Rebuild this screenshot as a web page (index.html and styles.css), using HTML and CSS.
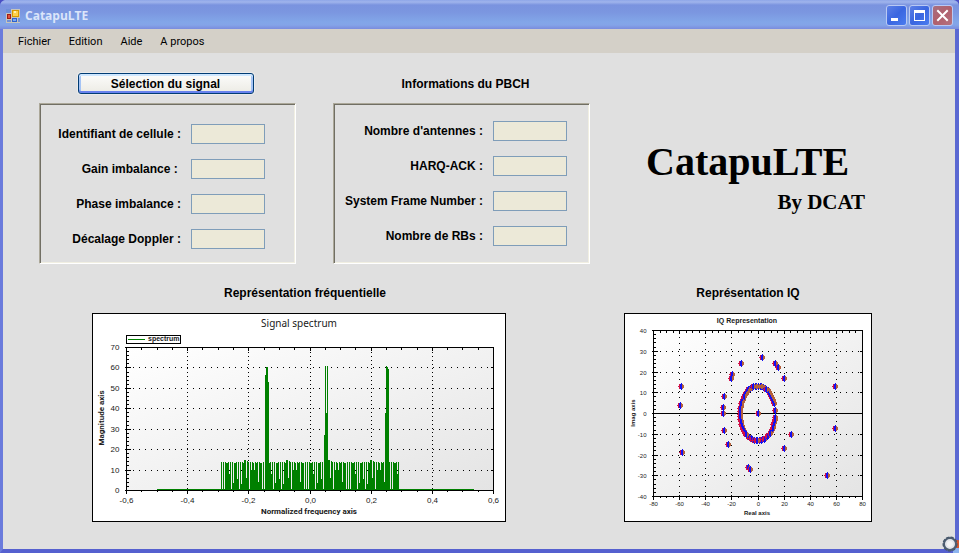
FILE: index.html
```html
<!DOCTYPE html>
<html lang="fr">
<head>
<meta charset="utf-8">
<title>CatapuLTE</title>
<link rel="stylesheet" href="styles.css">
</head>
<body>
<div class="window">
  <header class="titlebar">
    <svg class="app-icon" width="14" height="14" viewBox="0 0 14 14" aria-hidden="true">
      <rect width="14" height="14" fill="#c9c5ba"/>
      <path d="M0 0h5v4H0zM1 11h4v2H1zM12 9h2v4h-2z" fill="#6f8fd8"/>
      <rect x="6.500" y="1.500" width="6" height="6" fill="#ffd24a" stroke="#d79a00"/>
      <rect x="8" y="2" width="2" height="2" fill="#fff2b0"/>
      <rect x="1.500" y="5.500" width="3" height="4" fill="#e0523c" stroke="#a01c14"/>
      <rect x="6.500" y="9.500" width="4" height="3" fill="#78a8f4" stroke="#2f62cc"/>
    </svg>
    <h1 class="title">CatapuLTE</h1>
    <div class="controls">
      <button class="control" type="button" aria-label="Réduire"><svg width="19" height="19" viewBox="0 0 19 19"><path d="M4 12h7v3H4z" fill="#fff"/></svg></button>
      <button class="control" type="button" aria-label="Agrandir"><svg width="19" height="19" viewBox="0 0 19 19"><path d="M4 4h11v11H4zM5 7v7h9V7z" fill="#fff" fill-rule="evenodd"/></svg></button>
      <button class="control close" type="button" aria-label="Fermer"><svg width="19" height="19" viewBox="0 0 19 19"><path d="M5 5l9 9M14 5l-9 9" stroke="#fff" stroke-width="2" stroke-linecap="square"/></svg></button>
    </div>
  </header>
  <nav class="menu">
    <button type="button">Fichier</button>
    <button type="button">Edition</button>
    <button type="button">Aide</button>
    <button type="button">A propos</button>
  </nav>
  <main class="content">
    <div class="top">
      <section class="group">
        <button class="select-signal" type="button">Sélection du signal</button>
        <div class="panel signal">
          <div class="field"><label for="cell">Identifiant de cellule :</label><input id="cell" type="text" readonly></div>
          <div class="field"><label for="gain">Gain imbalance :&nbsp;</label><input id="gain" type="text" readonly></div>
          <div class="field"><label for="phase">Phase imbalance :</label><input id="phase" type="text" readonly></div>
          <div class="field"><label for="doppler">Décalage Doppler :</label><input id="doppler" type="text" readonly></div>
        </div>
      </section>
      <section class="group">
        <h2 class="heading tall">Informations du PBCH</h2>
        <div class="panel pbch">
          <div class="field"><label for="ant">Nombre d'antennes :</label><input id="ant" type="text" readonly></div>
          <div class="field"><label for="harq">HARQ-ACK :</label><input id="harq" type="text" readonly></div>
          <div class="field"><label for="sfn">System Frame Number :</label><input id="sfn" type="text" readonly></div>
          <div class="field"><label for="rbs">Nombre de RBs :</label><input id="rbs" type="text" readonly></div>
        </div>
      </section>
      <div class="brand">
        <p class="brand-name">CatapuLTE</p>
        <p class="brand-by">By DCAT</p>
      </div>
    </div>
    <div class="bottom">
      <section class="figure">
        <h2 class="heading offset">Représentation fréquentielle</h2>
        <svg id="spectrum" class="chart" viewBox="0 0 414 209" role="img" aria-label="Signal spectrum"></svg>
      </section>
      <section class="figure">
        <h2 class="heading">Représentation IQ</h2>
        <svg id="iq" class="chart" viewBox="0 0 248 209" role="img" aria-label="IQ Representation"></svg>
      </section>
    </div>
  </main>
  <svg class="corner" width="17" height="17" viewBox="0 0 17 17" aria-hidden="true">
    <path d="M11 12h6v5h-6z" fill="#8db4ee"/>
    <circle cx="15" cy="8" r="4" fill="#d9572c"/>
    <circle cx="8" cy="8" r="6" fill="#e9ebee" stroke="#3d4f63" stroke-width="3" stroke-dasharray="3 1"/>
    <circle cx="8" cy="8" r="6" fill="#e4e6ea" stroke="#4d5d70" stroke-width="2"/>
    <circle cx="8" cy="8" r="3" fill="#f4f4f4"/>
  </svg>
</div>
<script src="charts.js"></script>
</body>
</html>
```
FILE: styles.css
```css
* { box-sizing: border-box; }

body {
  margin: 0;
  background: #4a4fc4;
  color: #000;
  font: 12px/16px "Liberation Sans", Arial, sans-serif;
}

h1, h2, p { margin: 0; }

button { font: inherit; color: inherit; padding: 0; }

.window {
  position: relative;
  display: flex;
  flex-direction: column;
  min-height: 100vh;
  border: solid #6b7bdc;
  border-width: 0 4px 4px 3px;
  border-bottom-color: #5560cf;
  border-right-color: #5a68d2;
  border-radius: 6px 6px 0 0;
  background: #e0e0e0;
}

.titlebar {
  display: flex;
  align-items: center;
  height: 29px;
  margin: 0 -4px 0 -3px;
  padding: 2px 6px 0;
  border-radius: 6px 6px 0 0;
  background: linear-gradient(#8ea6e8 0, #a0b4ec 2px, #7a93df 5px, #7b96e0 12px, #82a6e8 22px, #84a4e8 25px, #7a8cdd 29px);
}

.app-icon { flex: none; }

.title {
  flex: 1;
  padding-left: 5px;
  color: #dbe5fa;
  font: bold 12px/16px "Open Sans", "Noto Sans", sans-serif;
}

.controls { display: flex; gap: 2px; }

.control {
  width: 21px;
  height: 21px;
  border: 1px solid #b9c9f4;
  border-radius: 3px;
  background: linear-gradient(135deg, #5d80e6, #3a66e0 50%, #4a7cf0);
}

.control svg { display: block; }

.control.close { background: linear-gradient(135deg, #a8707f, #b0606c 50%, #b57280); }

.menu {
  display: flex;
  gap: 18px;
  height: 24px;
  padding: 1px 0 0 15px;
  background: #d4d0c8;
}

.menu button {
  border: 0;
  background: none;
  font: 11px/22px Roboto, sans-serif;
}

.content { flex: 1; padding: 20px 0 27px; }

.top {
  display: grid;
  grid-template-columns: 257fr 257fr 239fr;
  column-gap: 37px;
  padding: 0 89px 0 36px;
}

.top .brand { margin-left: 19px; }

.group { display: flex; flex-direction: column; gap: 9px; }

.heading {
  text-align: center;
  font-size: 12px;
  line-height: 16px;
}

.heading.tall { padding: 3px 0 2px 8px; }

.heading.offset { padding-left: 12px; }

.select-signal {
  align-self: center;
  width: 176px;
  height: 21px;
  margin-right: 4px;
  border: 1px solid #003c74;
  border-radius: 3px;
  background: linear-gradient(#fcfcfb, #ecebe4);
  box-shadow: inset 0 2px #cee7ff, inset 0 -2px #6982ee, inset 2px 0 #a5c4f5, inset -2px 0 #a5c4f5, 0 0 0 1px #ebebeb;
  font-weight: bold;
}

.panel {
  display: flex;
  flex-direction: column;
  gap: 15px;
  height: 161px;
  border: 1px solid;
  border-color: #aca899 #fff #fff #aca899;
  box-shadow: inset 1px 1px #716f64, inset -1px -1px #f1efe2;
}

.signal { padding: 20px 30px 0 0; }

.pbch { padding: 17px 22px 0 0; }

.field {
  display: flex;
  align-items: center;
  justify-content: flex-end;
  gap: 10px;
  font-weight: bold;
}

.field input {
  width: 74px;
  height: 20px;
  border: 1px solid #7f9db9;
  background: #ece9d8;
}

.brand {
  justify-self: start;
  padding-top: 65px;
  font-family: "Liberation Serif", "Times New Roman", serif;
  font-weight: bold;
}

.brand-name { padding-right: 16px; font-size: 40px; line-height: 48px; }

.brand-by { text-align: right; font-size: 21px; line-height: 32px; }

.bottom {
  display: grid;
  grid-template-columns: 414fr 248fr;
  column-gap: 118px;
  margin-top: 21px;
  padding: 0 83px 0 89px;
}

.figure { display: flex; flex-direction: column; gap: 12px; }

.chart { display: block; width: 100%; height: auto; font-family: "Liberation Sans", Arial, sans-serif; }

.chart text { fill: #202020; }
.chart .bold { font-weight: bold; }
.chart .caption { font-size: 10px; font-family: "Noto Sans", sans-serif; }
.chart .axis { font-size: 8px; }
.chart .title-text { font-size: 8px; font-family: Roboto, sans-serif; }
.chart .key { font-size: 7px; }
.chart .small { font-size: 6px; }

.corner { position: absolute; right: -4px; bottom: -4px; }
```
FILE: charts.js
```js
const NS = 'http://www.w3.org/2000/svg';

function add(parent, tag, attrs, text) {
  const node = document.createElementNS(NS, tag);
  for (const key in attrs) node.setAttribute(key, attrs[key]);
  if (text !== undefined) node.textContent = text;
  parent.appendChild(node);
  return node;
}

function frame(svg, w, h, p, id) {
  const grad = add(add(svg, 'defs', {}), 'linearGradient', { id, x1: 0, y1: 0, x2: 1, y2: 1 });
  add(grad, 'stop', { offset: 0, 'stop-color': '#ffffff' });
  add(grad, 'stop', { offset: 1, 'stop-color': '#e4e4e4' });
  add(svg, 'rect', { x: 0.5, y: 0.5, width: w - 1, height: h - 1, fill: '#fff', stroke: '#000' });
  add(svg, 'rect', { x: p.l, y: p.t, width: p.r - p.l, height: p.b - p.t, fill: `url(#${id})` });
}

function line(svg, x1, y1, x2, y2, dash) {
  const attrs = { x1, y1, x2, y2, stroke: '#000', 'shape-rendering': 'crispEdges' };
  if (dash) attrs['stroke-dasharray'] = dash;
  add(svg, 'line', attrs);
}

// Draws the grid, ticks and tick labels for both axes, then the plot border.
function axes(svg, p, xs, ys, minorX, minorY, cls, drop, vdash) {
  const snap = v => Math.floor(v) + 0.5;
  const w = p.r - p.l, h = p.b - p.t;
  xs.forEach((label, i) => {
    const x = snap(p.l + w * i / (xs.length - 1));
    if (i > 0 && i < xs.length - 1) line(svg, x, p.t, x, p.b, vdash);
    line(svg, x, p.b - 2, x, p.b + 3);
    line(svg, x, p.t, x, p.t + 3);
    add(svg, 'text', { x, y: p.b + drop, 'text-anchor': 'middle', class: cls }, label);
  });
  ys.forEach((label, i) => {
    const y = snap(p.b - h * i / (ys.length - 1));
    if (i > 0 && i < ys.length - 1) line(svg, p.l, y, p.r, y, '1 5');
    line(svg, p.l - 2, y, p.l + 4, y);
    line(svg, p.r - 3, y, p.r, y);
    add(svg, 'text', { x: p.l - 7, y: y + 2, 'text-anchor': 'end', class: cls }, label);
  });
  for (let i = 1; i < minorX; i++) {
    const x = snap(p.l + w * i / minorX);
    line(svg, x, p.b - 1, x, p.b + 1);
    line(svg, x, p.t, x, p.t + 2);
  }
  for (let i = 1; i < minorY; i++) {
    const y = snap(p.b - h * i / minorY);
    line(svg, p.l - 1, y, p.l + 2, y);
    line(svg, p.r - 1, y, p.r, y);
  }
  add(svg, 'rect', { x: p.l, y: p.t, width: w, height: h, fill: 'none', stroke: '#000', 'shape-rendering': 'crispEdges' });
}

function drawSpectrum() {
  const svg = document.getElementById('spectrum');
  const p = { l: 34.5, r: 401.5, t: 34.5, b: 177.5 };
  frame(svg, 414, 209, p, 'spectrum-fill');
  axes(svg, p, ['-0,6', '-0,4', '-0,2', '0,0', '0,2', '0,4', '0,6'],
    ['0', '10', '20', '30', '40', '50', '60', '70'], 24, 35, 'axis', 12, '1 3');

  const shape = [28, 0, 28, 1, 28, 27, 27, 28, 16, 28, 0, 28, 7, 27, 27, 28, 11, 28, 0, 28,
    6, 28, 27, 30, 30, 12, 29, 28, 0, 28, 20, 28, 27, 20, 28, 27, 28, 8, 28, 27, 27, 0];
  const peaks = { 173: 115, 174: 123, 175: 123, 176: 108, 232: 55, 233: 124, 234: 77, 235: 124,
    293: 77, 294: 124, 295: 123, 296: 121 };
  let d = 'M65 176h317v1H65z';
  for (let x = 129; x < 308; x++) {
    const h = peaks[x] || shape[(x - 129) % shape.length];
    if (h) d += `M${x} ${177 - h}h1v${h}h-1z`;
  }
  add(svg, 'path', { d, fill: '#008000', 'shape-rendering': 'crispEdges' });

  add(svg, 'rect', { x: 34.5, y: 22.5, width: 54, height: 8, fill: '#fff', stroke: '#000' });
  add(svg, 'path', { d: 'M36 26h17v1H36z', fill: '#008000', 'shape-rendering': 'crispEdges' });
  add(svg, 'text', { x: 56, y: 28, class: 'key bold' }, 'spectrum');
  add(svg, 'text', { x: 207, y: 14, 'text-anchor': 'middle', class: 'caption' }, 'Signal spectrum');
  add(svg, 'text', { x: 217, y: 201, 'text-anchor': 'middle', class: 'title-text bold' }, 'Normalized frequency axis');
  add(svg, 'text', { transform: 'translate(12 105) rotate(-90)', 'text-anchor': 'middle', class: 'title-text bold' }, 'Magnitude axis');
}

function drawIq() {
  const svg = document.getElementById('iq');
  const p = { l: 29.5, r: 238.5, t: 17.5, b: 183.5 };
  frame(svg, 248, 209, p, 'iq-fill');
  axes(svg, p, ['-80', '-60', '-40', '-20', '0', '20', '40', '60', '80'],
    ['-40', '-30', '-20', '-10', '0', '10', '20', '30', '40'], 32, 40, 'small', 9, '1 5');
  line(svg, p.l, 100.5, p.r, 100.5);

  // Each sample is a small diamond shaded red, blue and brown from left to right.
  const marker = (x, y) => {
    const g = add(svg, 'g', { transform: `translate(${Math.round(x)} ${Math.round(y)})` });
    add(g, 'path', { d: 'M-3 0h1v-2h1v5h-1v-2h-1z', fill: '#d01048' });
    add(g, 'path', { d: 'M1-2h1v1h1v3h-1v1h-1z', fill: '#b4603c' });
    add(g, 'path', { d: 'M-1-2h1v-1h1v7h-1v-1h-1z', fill: '#1410f0' });
  };
  const count = 61;
  for (let i = 0; i < count; i++) {
    const k = i * 23 % count;
    const t = (22 + k * 330 / (count - 1)) * Math.PI / 180;
    marker(133.5 + 17.5 * Math.cos(t), 100 - 27.5 * Math.sin(t));
  }
  marker(151, 97);
  const points = [[3, 27], [-13, 24], [13, 24], [15, 22], [20, 17], [-20, 19], [-21, 17], [-59, 13],
    [59, 13], [-26, 8], [-60, 4], [-27, 3], [-27, 0], [0, 0], [-26, -8], [-23, -15], [-58, -19],
    [-8, -26], [-6, -27], [20, -17], [25, -10], [59, -7], [53, -30]];
  points.forEach(([i, q]) => marker(29.5 + (i + 80) * 209 / 160, 17 + (40 - q) * 166 / 80));

  add(svg, 'text', { x: 123, y: 10, 'text-anchor': 'middle', class: 'key bold' }, 'IQ Representation');
  add(svg, 'text', { x: 133, y: 202, 'text-anchor': 'middle', class: 'small bold' }, 'Real axis');
  add(svg, 'text', { transform: 'translate(11 100) rotate(-90)', 'text-anchor': 'middle', class: 'small bold' }, 'Imag axis');
}

drawSpectrum();
drawIq();
```
